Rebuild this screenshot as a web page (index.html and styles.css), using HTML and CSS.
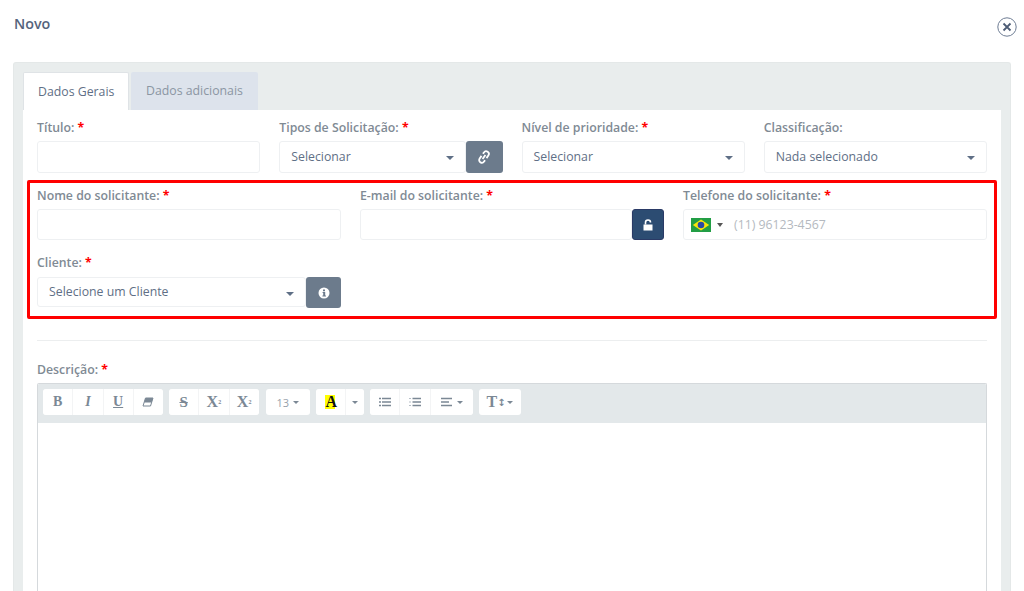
FILE: index.html
```html
<!DOCTYPE html>
<html lang="pt">
<head>
<meta charset="utf-8">
<title>Novo</title>
<link rel="stylesheet" href="styles.css">
</head>
<body>
<header class="top">
  <h1 class="title">Novo</h1>
  <svg class="close" viewBox="0 0 20 20"><circle cx="10" cy="10" r="9.200" fill="none" stroke="#6d7c93" stroke-width="1"/><path d="M6.500 6.500l7 7M13.500 6.500l-7 7" stroke="#4d5c75" stroke-width="1.800"/></svg>
</header>
<main class="panel">
  <nav class="tabs">
    <div class="tab active">Dados Gerais</div>
    <div class="tab">Dados adicionais</div>
  </nav>
  <section class="content">
    <div class="row four">
      <div class="field"><label class="lbl">Título: <b class="req">*</b></label><div class="control"></div></div>
      <div class="field"><label class="lbl">Tipos de Solicitação: <b class="req">*</b></label>
        <div class="group"><div class="control select">Selecionar<i class="caret"></i></div>
          <span class="btn grey"><svg class="ic" viewBox="0 0 14 14"><g fill="none" stroke="#fff" stroke-width="1.800" transform="rotate(-55 7 7)"><path d="M6.500 4.300H3.300a2.700 2.700 0 0 0 0 5.400H5"/><path d="M7.500 9.700h3.200a2.700 2.700 0 0 0 0-5.400H9"/><path d="M4.500 7h5"/></g></svg></span></div></div>
      <div class="field"><label class="lbl">Nível de prioridade: <b class="req">*</b></label><div class="control select">Selecionar<i class="caret"></i></div></div>
      <div class="field"><label class="lbl">Classificação:</label><div class="control select">Nada selecionado<i class="caret"></i></div></div>
    </div>
    <div class="redbox">
      <div class="row three">
        <div class="field"><label class="lbl">Nome do solicitante: <b class="req">*</b></label><div class="control short"></div></div>
        <div class="field"><label class="lbl">E-mail do solicitante: <b class="req">*</b></label>
          <div class="group"><div class="control short"></div>
            <span class="btn navy short"><svg class="ic" viewBox="0 0 14 14"><path d="M2.500 6.500h9v6h-9z" fill="#fff"/><path d="M4.500 6.500V4.500a2.500 2.500 0 0 1 5 0" fill="none" stroke="#fff" stroke-width="1.600"/></svg></span></div></div>
        <div class="field"><label class="lbl">Telefone do solicitante: <b class="req">*</b></label>
          <div class="control short phone">
            <svg class="flag" viewBox="0 0 20 14"><rect width="20" height="14" fill="#229e45"/><path d="M10 1.500L18.200 7 10 12.500 1.800 7z" fill="#f8e509"/><circle cx="10" cy="7" r="3.300" fill="#2b49a3"/></svg>
            <i class="caret dark"></i><span class="ph">(11) 96123-4567</span>
          </div></div>
      </div>
      <div class="row three second">
        <div class="field"><label class="lbl">Cliente: <b class="req">*</b></label>
          <div class="group"><div class="control select short tight">Selecione um Cliente<i class="caret"></i></div>
            <span class="btn grey short tight"><svg class="ic" viewBox="0 0 14 14"><circle cx="7" cy="7" r="5.500" fill="#fff"/><path d="M6 3.400h2v1.800H6zM5.600 6h2.600v3.600h.8v1H5.400v-1h.8V7h-.6z" fill="#6c7b8c"/></svg></span></div></div>
      </div>
    </div>
    <hr class="sep">
    <label class="lbl desc">Descrição: <b class="req">*</b></label>
    <div class="editor">
      <div class="toolbar">
        <div class="tgroup">
          <span class="tb serif bold">B</span><span class="tb serif italic">I</span><span class="tb serif under">U</span>
          <span class="tb"><svg class="tic" viewBox="0 0 12 10"><path d="M3.500 1H11L8.500 9H1z" fill="none" stroke="#7b8895" stroke-width="1"/><path d="M3.500 1H11L9.600 5.500H2.100z" fill="#7b8895"/></svg></span>
        </div>
        <div class="tgroup">
          <span class="tb serif bold strike">S</span><span class="tb serif bold xl">X<sup class="mini">2</sup></span><span class="tb serif bold xl">X<sub class="mini">2</sub></span>
        </div>
        <div class="tgroup shifted"><span class="tb wide num">13<i class="caret small"></i></span></div>
        <div class="tgroup">
          <span class="tb"><span class="hl">A</span></span><span class="tb narrow"><i class="caret small"></i></span>
        </div>
        <div class="tgroup">
          <span class="tb"><svg class="tic" viewBox="0 0 12 10"><path d="M3 1.500H12M3 5H12M3 8.500H12" stroke="#7b8895" stroke-width="1.400"/><path d="M0 1.500h2M0 5h2M0 8.500h2" stroke="#7b8895" stroke-width="1.400"/></svg></span>
          <span class="tb"><svg class="tic" viewBox="0 0 12 10"><path d="M3.500 1.500H12M3.500 5H12M3.500 8.500H12" stroke="#7b8895" stroke-width="1.400"/><path d="M0 1.500h2M0 5h2M0 8.500h2" stroke="#b5bdc6" stroke-width="1"/></svg></span>
          <span class="tb wide2"><svg class="tic" viewBox="0 0 12 10"><path d="M0 1.500H11M0 5H8M0 8.500H11" stroke="#7b8895" stroke-width="1.400"/></svg><i class="caret small"></i></span>
        </div>
        <div class="tgroup"><span class="tb wide3 serif bold big">T<span class="arrow">↕</span><i class="caret small tuck"></i></span></div>
      </div>
      <div class="area"></div>
    </div>
  </section>
</main>
</body>
</html>
```
FILE: styles.css
```css
* { box-sizing: border-box; }
html, body { margin: 0; height: 591px; overflow: hidden; background: #fff; }
body { font-family: "Open Sans", sans-serif; font-size: 12.3px; color: #5f6f86; }

.top { display: flex; justify-content: space-between; align-items: flex-start; height: 62px; padding: 14px 7px 0 14px; }
.title { margin: 0; font-size: 14.3px; line-height: 19px; font-weight: 600; color: #55647c; }
.close { width: 20px; height: 20px; margin-top: 3px; }

.panel { margin: 0 13px; padding: 10px 10px 0; height: 529px; overflow: hidden; background: #e9eded; border: 1px solid #e4e8e8; border-bottom: 0; border-radius: 3px 3px 0 0; }
.tabs { display: flex; gap: 2px; height: 38px; margin-top: -1px; margin-left: -1px; }
.tab { padding: 0 15px; line-height: 37px; height: 38px; background: #dde3ec; color: #8b96a3; border-radius: 2px 2px 0 0; }
.tab.active { background: #fff; color: #5f6f86; border: 1px solid #dfe3e6; border-bottom: 0; padding: 0 9px 0 14px; width: 106px; }

.content { background: #fff; margin-left: -1px; margin-right: -1px; padding: 10px 14px 0; height: 481px; overflow: hidden; }
.row { display: grid; column-gap: 19px; }
.four { grid-template-columns: repeat(4, 1fr); }
.three { grid-template-columns: repeat(3, 1fr); }
.second { margin-top: 15px; }
.second .lbl { margin-bottom: 6px; }

.lbl { display: block; font-weight: 600; line-height: 16px; color: #808a94; margin-bottom: 5px; }
.req { color: #f00; font-weight: 700; }

.control { flex: 1; min-width: 0; height: 32px; line-height: 30px; padding: 0 11px; border: 1px solid #eef0f2; border-radius: 3px; background: #fff; position: relative; }
.control.short { height: 31px; line-height: 29px; }
.control.tight { height: 30px; line-height: 28px; }
.select { color: #5f6f86; }
.group { display: flex; }
.btn { display: flex; align-items: center; justify-content: center; width: 37px; height: 32px; flex: none; border-radius: 3px; }
.btn.short { height: 31px; width: 35px; }
.grey { background: #6c7b8c; }
.navy.short { width: 32px; background: #2c4c72; border: 1px solid #2a3a66; }
.ic { width: 14px; height: 14px; }

.caret { display: inline-block; width: 0; height: 0; border-left: 4px solid transparent; border-right: 4px solid transparent; border-top: 4px solid #5f6f86; }
.select .caret { position: absolute; right: 11px; top: 14px; }
.caret.small { border-left-width: 3px; border-right-width: 3px; border-top-width: 3px; border-top-color: #7b8895; margin-left: 4px; vertical-align: middle; }
.caret.tuck { margin-left: 1px; }
.caret.dark { border-left-width: 3px; border-right-width: 3px; border-top-width: 4px; border-top-color: #555; }

.redbox { margin: 7px -10px 0; padding: 5px 7px 10px; height: 139px; border: 3px solid #f00; border-radius: 2px; }

.phone { display: flex; align-items: center; padding: 0 0 0 7px; }
.flag { width: 20px; height: 14px; margin-right: 6px; flex: none; }
.ph { color: #b4b9c0; margin-left: 11px; }

.sep { border: 0; border-top: 1px solid #eceeef; margin: 21px 0 0; }
.desc { margin-top: 21px; margin-bottom: 5px; }

.editor { height: 208px; overflow: hidden; border: 1px solid #d5d9dc; border-bottom: 0; border-radius: 2px 2px 0 0; }
.toolbar { display: flex; gap: 6px; height: 39px; padding: 5px 5px 0; background: #e3e8ea; }
.tgroup { display: flex; gap: 1px; height: 26px; background: #f3f4f5; border-radius: 3px; overflow: hidden; }
.shifted { margin-left: 1px; }
.tb { display: flex; align-items: center; justify-content: center; width: 29.250px; height: 26px; background: #fff; color: #7b8895; font-size: 12px; }
.serif { font-family: "Liberation Serif", serif; font-size: 14px; }
.bold { font-weight: 700; }
.italic { font-style: italic; font-weight: 700; }
.under { text-decoration: underline; font-weight: 700; }
.strike { text-decoration: line-through; font-size: 15px; }
.xl { font-size: 16px; }
.mini { font-size: 6px; line-height: 0; }
.wide { width: 44px; }
.num { color: #97a1ab; font-size: 11px; }
.narrow { width: 18px; }
.narrow .caret { margin: 0; }
.wide2 { width: 42px; }
.wide3 { width: 42px; }
.big { font-size: 16px; }
.arrow { font-size: 10px; font-family: "DejaVu Sans", sans-serif; }
.hl { display: inline-block; width: 10px; height: 14px; line-height: 14px; text-align: center; background: #ff0; color: #111; font-family: "Liberation Serif", serif; font-weight: 700; font-size: 16px; }
.tic { width: 12px; height: 10px; }
.area { height: 168px; background: #fff; }
```
